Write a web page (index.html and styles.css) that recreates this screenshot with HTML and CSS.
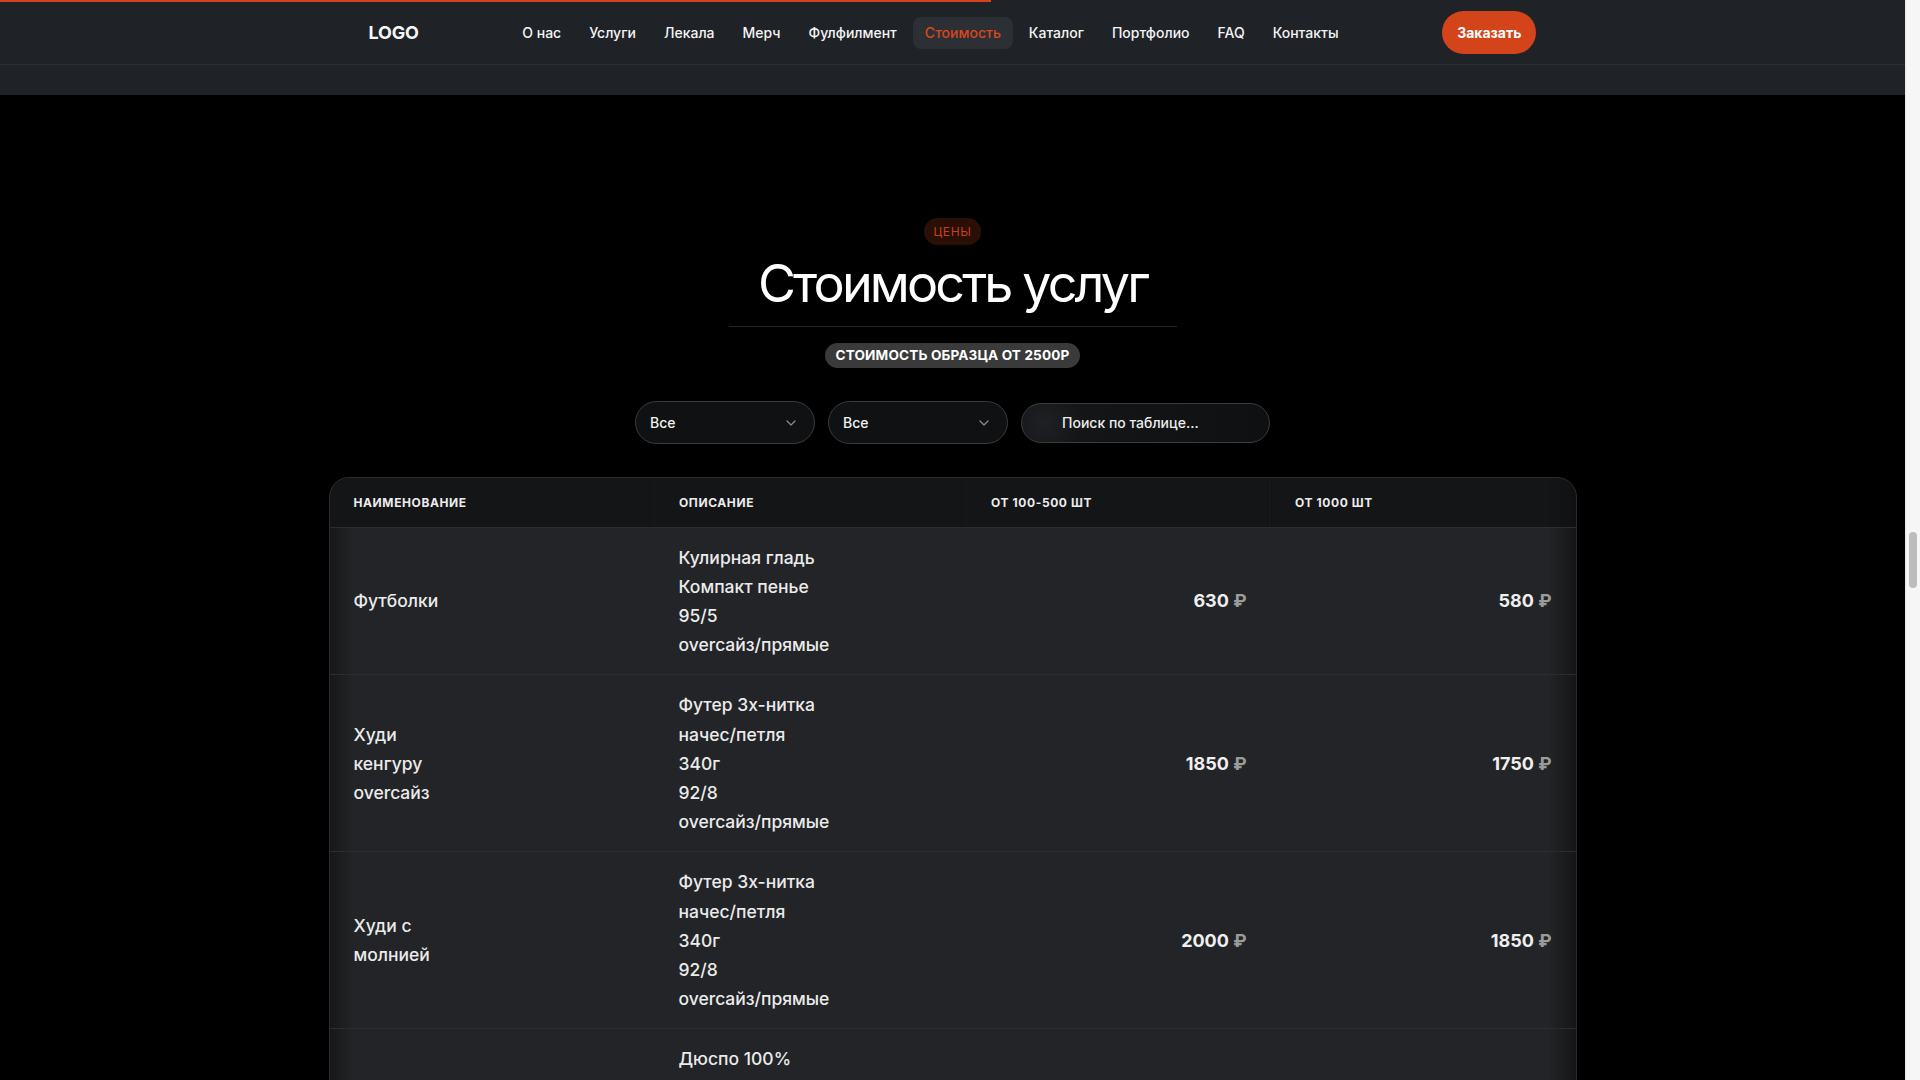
FILE: index.html
```html
<!DOCTYPE html>
<html lang="ru">
<head>
<meta charset="utf-8">
<title>Стоимость услуг</title>
<link rel="stylesheet" href="styles.css">
</head>
<body>
<div class="page">
  <header class="topbar">
    <div class="progress"></div>
    <div class="topbar-inner">
      <div class="logo">LOGO</div>
      <nav class="nav">
        <a class="nav-item">О нас</a>
        <a class="nav-item">Услуги</a>
        <a class="nav-item">Лекала</a>
        <a class="nav-item">Мерч</a>
        <a class="nav-item">Фулфилмент</a>
        <a class="nav-item active">Стоимость</a>
        <a class="nav-item">Каталог</a>
        <a class="nav-item">Портфолио</a>
        <a class="nav-item">FAQ</a>
        <a class="nav-item">Контакты</a>
      </nav>
      <a class="order-btn">Заказать</a>
    </div>
  </header>
  <div class="subbar"></div>

  <main class="pricing">
    <div class="eyebrow">ЦЕНЫ</div>
    <h1 class="title">Стоимость услуг</h1>
    <div class="title-line"></div>
    <div class="sample">СТОИМОСТЬ ОБРАЗЦА ОТ 2500Р</div>

    <div class="filters">
      <div class="select"><span>Все</span><svg class="chev" width="10" height="6" viewBox="0 0 10 6"><path d="M1 1l4 4 4-4" fill="none" stroke="#8c8c8c" stroke-width="1.2" stroke-linecap="round" stroke-linejoin="round"/></svg></div>
      <div class="select"><span>Все</span><svg class="chev" width="10" height="6" viewBox="0 0 10 6"><path d="M1 1l4 4 4-4" fill="none" stroke="#8c8c8c" stroke-width="1.2" stroke-linecap="round" stroke-linejoin="round"/></svg></div>
      <div class="search">Поиск по таблице...</div>
    </div>

    <div class="table-wrap">
      <table class="price-table">
        <colgroup>
          <col class="c1"><col class="c2"><col class="c3"><col class="c4">
        </colgroup>
        <thead>
          <tr>
            <th>Наименование</th>
            <th>Описание</th>
            <th>От 100-500 шт</th>
            <th>От 1000 шт</th>
          </tr>
        </thead>
        <tbody>
          <tr>
            <td class="name">Футболки</td>
            <td class="desc">Кулирная гладь<br>Компакт пенье<br>95/5<br>overcайз/прямые</td>
            <td class="price">630 <span class="rub">₽</span></td>
            <td class="price">580 <span class="rub">₽</span></td>
          </tr>
          <tr>
            <td class="name">Худи<br>кенгуру<br>overcайз</td>
            <td class="desc">Футер 3х-нитка<br>начес/петля<br>340г<br>92/8<br>overcайз/прямые</td>
            <td class="price">1850 <span class="rub">₽</span></td>
            <td class="price">1750 <span class="rub">₽</span></td>
          </tr>
          <tr>
            <td class="name">Худи с<br>молнией</td>
            <td class="desc">Футер 3х-нитка<br>начес/петля<br>340г<br>92/8<br>overcайз/прямые</td>
            <td class="price">2000 <span class="rub">₽</span></td>
            <td class="price">1850 <span class="rub">₽</span></td>
          </tr>
          <tr>
            <td class="name">Свитшот</td>
            <td class="desc">Дюспо 100%<br>полиэстер<br>подкладка сетка<br>overcайз/прямые</td>
            <td class="price">2500 <span class="rub">₽</span></td>
            <td class="price">2300 <span class="rub">₽</span></td>
          </tr>
        </tbody>
      </table>
    </div>
  </main>
</div>
<div class="scrollbar"><div class="thumb"></div></div>
</body>
</html>
```
FILE: styles.css
```css
* { box-sizing: border-box; }

html, body {
  margin: 0;
  height: 100%;
}

body {
  display: flex;
  height: 100vh;
  overflow: hidden;
  background: #000;
  color: #f2f2f2;
  font-family: "Inter", "Noto Sans", sans-serif;
}

.page {
  flex: 1;
  min-width: 0;
  overflow: hidden;
  background: #000;
}

/* ---------- header ---------- */
.topbar {
  position: relative;
  height: 65px;
  background: #1f2226;
  border-bottom: 1px solid #2c3035;
}

.progress {
  position: absolute;
  left: 0;
  top: 0;
  width: 52%;
  height: 2px;
  background: #d4441b;
}

.topbar-inner {
  max-width: 1200px;
  height: 64px;
  margin: 0 auto;
  padding: 0 16px;
  display: flex;
  align-items: center;
  justify-content: space-between;
}

.logo {
  font-size: 18px;
  font-weight: 700;
  color: #f5f5f5;
  letter-spacing: -0.01em;
}

.nav {
  display: flex;
  align-items: center;
  gap: 4px;
  padding-top: 1px;
}

.nav-item {
  display: block;
  height: 32px;
  line-height: 32px;
  padding: 0 12px;
  border-radius: 8px;
  font-size: 14px;
  font-weight: 500;
  color: #f4f4f4;
  white-space: nowrap;
}

.nav-item.active {
  background: #2c3035;
  color: #d9471d;
}

.order-btn {
  display: block;
  height: 43px;
  line-height: 43px;
  padding: 0 15px;
  border-radius: 22px;
  background: #d4441a;
  color: #fff;
  font-size: 14px;
  font-weight: 700;
}

.subbar {
  height: 30px;
  background: #1f2226;
}

/* ---------- pricing ---------- */
.pricing {
  padding: 123px 16px 0;
  display: flex;
  flex-direction: column;
  align-items: center;
}

.eyebrow {
  height: 27px;
  line-height: 27px;
  padding: 0 10px;
  border-radius: 14px;
  background: #2a0f07;
  color: #c9401a;
  font-size: 12px;
  letter-spacing: 0.05em;
}

.title {
  margin: 10px 0 0;
  font-size: 52px;
  line-height: 57px;
  font-weight: 400;
  letter-spacing: -0.055em;
  color: #fff;
}

.title-line {
  width: 448px;
  height: 1px;
  margin-top: 14px;
  background: #232323;
}

.sample {
  margin-top: 16px;
  height: 25px;
  line-height: 25px;
  padding: 0 11px;
  border-radius: 13px;
  background: #3a3a3b;
  color: #fff;
  font-size: 13.6px;
  font-weight: 700;
  letter-spacing: 0.01em;
}

.filters {
  margin-top: 33px;
  display: flex;
  align-items: center;
  gap: 13px;
}

.select {
  width: 180px;
  height: 43px;
  padding: 0 14px;
  border: 1px solid #3a3b3e;
  border-radius: 22px;
  background: #101113;
  display: flex;
  align-items: center;
  justify-content: space-between;
  font-size: 14px;
  font-weight: 500;
  color: #f2f2f2;
}

.chev { margin-right: 4px; }

.search {
  width: 249px;
  height: 40px;
  line-height: 38px;
  padding-left: 40px;
  border: 1px solid #3a3b3e;
  border-radius: 20px;
  background: radial-gradient(circle at 22px 50%, #1f2023 0, #141517 40px, #0f1012 100%);
  font-size: 14px;
  font-weight: 500;
  color: #ededed;
}

/* ---------- table ---------- */
.table-wrap {
  margin-top: 33px;
  width: 100%;
  max-width: 1248px;
  border: 1px solid #2a2b2e;
  border-radius: 20px;
  overflow: hidden;
  background: #232427;
}

.price-table {
  width: 100%;
  border-collapse: collapse;
  table-layout: fixed;
}

.c1 { width: 325px; }
.c2 { width: 312px; }
.c3 { width: 304px; }

.price-table th {
  height: 49px;
  padding: 0 24px;
  background: #141517;
  border-right: 1px solid #18191c;
  border-bottom: 1px solid #2c2d31;
  text-align: left;
  font-size: 12px;
  font-weight: 700;
  text-transform: uppercase;
  letter-spacing: 0.05em;
  color: #ececec;
}

.price-table th:last-child {
  border-right: 0;
  background: linear-gradient(to left, #0f1012 0, #141517 28px);
}

.price-table td {
  padding: 15px 24px;
  font-size: 17.5px;
  line-height: 29.2px;
  font-weight: 500;
  color: #ebebeb;
  vertical-align: middle;
  border-bottom: 1px solid #2b2c30;
}

.price-table td:first-child {
  background: linear-gradient(to right, rgba(0,0,0,0.35) 0, rgba(0,0,0,0) 24px);
}

.price-table td:last-child {
  background: linear-gradient(to left, rgba(0,0,0,0.4) 0, rgba(0,0,0,0) 28px);
}

.price-table td.price {
  text-align: right;
  font-size: 18px;
  font-weight: 700;
  color: #efefef;
  white-space: nowrap;
}

.rub {
  color: #9b9b9b;
  font-weight: 700;
}

/* ---------- scrollbar ---------- */
.scrollbar {
  width: 15px;
  flex: none;
  background: #f6f6f6;
  border-left: 1px solid #e6e6e6;
}

.thumb {
  width: 8px;
  height: 56px;
  margin: 532px 0 0 3px;
  border-radius: 4px;
  background: #bcbcbc;
}
```
